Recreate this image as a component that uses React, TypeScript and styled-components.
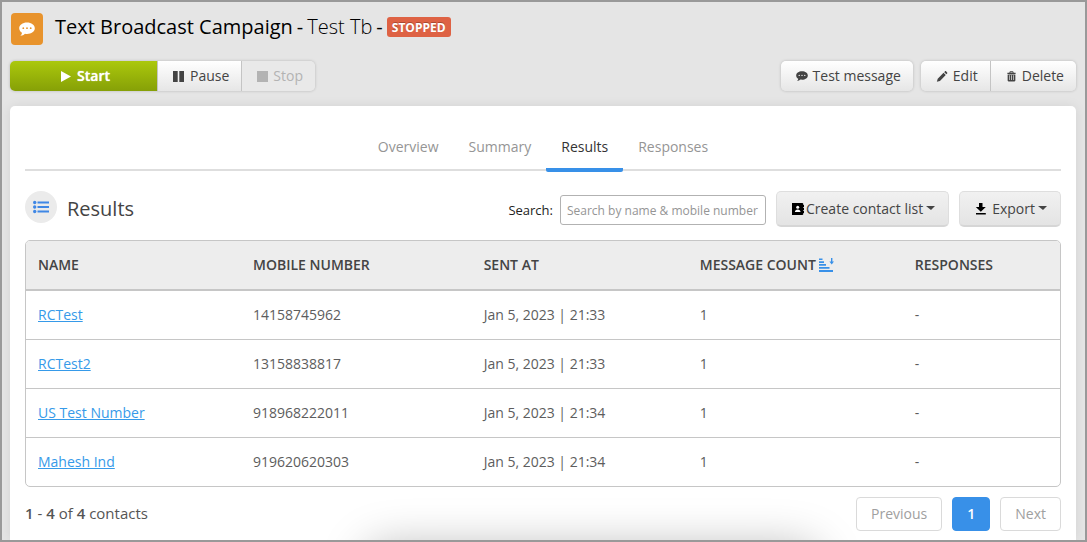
import React from "react";
import styled, { createGlobalStyle, css } from "styled-components";

const GlobalStyle = createGlobalStyle`
  *, *::before, *::after { box-sizing: border-box; }
  body {
    margin: 0;
    background: #e5e5e5;
    color: #444;
    font-family: "Open Sans", "Noto Sans", sans-serif;
    font-size: 14px;
    line-height: 20px;
  }
  button, input { font: inherit; color: inherit; margin: 0; }
`;

const Frame = styled.div`
  position: relative;
  display: flex;
  flex-direction: column;
  min-height: 100vh;
  padding: 11px 9px 0 8px;
  border: 2px solid #999;
  overflow: hidden;
`;

const Header = styled.header`
  display: flex;
  gap: 12px;
  padding-left: 1px;
`;

const CampaignIcon = styled.span`
  display: grid;
  place-items: center;
  width: 32px;
  height: 32px;
  border-radius: 4px;
  background: #e8932c;
  color: #fff;
`;

const Title = styled.h1`
  display: flex;
  align-items: center;
  gap: 4px;
  height: 28px;
  margin: 0;
  font-size: 20px;
  font-weight: 400;
  color: #000;
`;

const CampaignName = styled.span`
  font-weight: 300;
`;

const StatusBadge = styled.span`
  padding: 1px 5px 0;
  border-radius: 3px;
  background: #de6244;
  color: #fff;
  font-size: 12px;
  font-weight: 700;
  line-height: 19px;
  text-shadow: 0 -1px 0 rgba(0, 0, 0, 0.25);
`;

const Toolbar = styled.div`
  display: flex;
  justify-content: space-between;
  margin-top: 16px;
`;

const ToolbarSide = styled.div`
  display: flex;
  gap: 8px;
`;

const ButtonGroup = styled.div`
  display: flex;
  border-radius: 5px;
  box-shadow: 0 0 3px rgba(0, 0, 0, 0.22);
  overflow: hidden;
`;

const ToolButton = styled.button<{ $primary?: boolean }>`
  display: flex;
  align-items: center;
  justify-content: center;
  gap: 5px;
  height: 30px;
  padding: 0 12px 1px 15px;
  border: 0;
  background: linear-gradient(#fff, #e6e6e6);
  white-space: nowrap;

  & + & { border-left: 1px solid #c4c4c4; }

  &:disabled {
    background: #e9e9e9;
    color: #b3b3b3;
  }

  ${(p) =>
    p.$primary &&
    css`
      gap: 6px;
      width: 147px;
      background: linear-gradient(#abc80c, #86a007);
      color: #fff;
      font-weight: 600;
      text-shadow: 0 0 1px #fff;
    `}
`;

const Card = styled.main`
  flex: 1;
  margin-top: 15px;
  padding: 0 15px 9px;
  border-radius: 5px 5px 0 0;
  background: #fff;
  box-shadow: 0 0 12px rgba(0, 0, 0, 0.08);
`;

const Tabs = styled.nav`
  display: flex;
  justify-content: center;
  padding-top: 31px;
  border-bottom: 2px solid #dedede;
`;

const Tab = styled.a<{ $active?: boolean }>`
  height: 35px;
  margin-bottom: -3px;
  padding: 0 15px;
  border-bottom: 4px solid ${(p) => (p.$active ? "#3890e8" : "transparent")};
  border-radius: 2px;
  color: ${(p) => (p.$active ? "#333" : "#959595")};
  text-decoration: none;
`;

const SectionBar = styled.div`
  display: flex;
  align-items: center;
  justify-content: space-between;
  padding: 20px 0 13px;
`;

const SectionTitle = styled.div`
  display: flex;
  gap: 10px;
`;

const RoundIcon = styled.span`
  display: grid;
  place-items: center;
  width: 32px;
  height: 32px;
  border-radius: 50%;
  background: #ebebeb;
  color: #3f87e5;
`;

const SectionHeading = styled.h2`
  margin: 0;
  font-size: 20px;
  font-weight: 400;
  line-height: 36px;
`;

const Actions = styled.div`
  display: flex;
  align-items: center;
  gap: 10px;
`;

const SearchField = styled.div`
  display: flex;
  align-items: center;
  gap: 7px;
  padding-top: 2px;
  color: #222;
  font-size: 13px;
`;

const SearchInput = styled.input`
  width: 206px;
  height: 30px;
  padding: 0 6px;
  border: 1px solid #b2b2b2;
  border-radius: 3px;
  background: #fff;
  font-size: 12px;

  &::placeholder { color: #959595; opacity: 1; }
`;

const MenuButton = styled.button<{ $tight?: boolean }>`
  display: flex;
  align-items: center;
  height: 36px;
  padding: 0 13px 0 15px;
  border: 1px solid #dedede;
  border-bottom: 2px solid #d6d6d6;
  border-radius: 5px;
  background: linear-gradient(#f1f1f1, #e4e4e4);
  white-space: nowrap;

  svg { margin-right: ${(p) => (p.$tight ? "1px" : "5px")}; color: #000; }

  &::after {
    content: "";
    margin: -2px 0 0 3px;
    border: 4px solid transparent;
    border-width: 4px 4px 0 5px;
    border-top-color: #444;
  }
`;

const TableBox = styled.div`
  border: 1px solid #c6c6c6;
  border-radius: 5px;
  overflow: hidden;
`;

const Table = styled.table`
  width: 100%;
  table-layout: fixed;
  border-collapse: separate;
  border-spacing: 0;
`;

const HeadCell = styled.th<{ $width: string }>`
  width: ${(p) => p.$width};
  height: 50px;
  padding: 0 0 0 12px;
  border-bottom: 2px solid #c6c6c6;
  background: #ededed;
  font-weight: 600;
  text-align: left;
  white-space: nowrap;

  svg { margin-left: 3px; color: #3890e8; vertical-align: -2px; }
`;

const Cell = styled.td`
  height: 49px;
  padding: 0 0 0 12px;
  border-bottom: 1px solid #c6c6c6;
  color: #5d5d5d;

  tr:last-child > & { height: 48px; border-bottom: 0; }
`;

const ContactLink = styled.a`
  color: #369ae9;
  text-decoration: underline;
  text-underline-offset: 1px;
`;

const Footer = styled.div`
  display: flex;
  justify-content: space-between;
  padding-top: 10px;
`;

const Count = styled.p`
  margin: 0;
  padding-top: 6px;
  color: #555;
  font-size: 15px;

  b { font-weight: 600; }
`;

const Pager = styled.div`
  position: relative;
  z-index: 1;
  display: flex;
  gap: 10px;
`;

const PageButton = styled.button<{ $current?: boolean }>`
  height: 34px;
  padding: 0 14px;
  border: 1px solid ${(p) => (p.$current ? "#3890e8" : "#dadada")};
  border-radius: 4px;
  background: ${(p) => (p.$current ? "#3890e8" : "#fff")};
  color: ${(p) => (p.$current ? "#fff" : "#a0a0a0")};
  font-weight: ${(p) => (p.$current ? 600 : 400)};
`;

const DockShadow = styled.div`
  position: absolute;
  top: 100%;
  left: 34%;
  right: 25%;
  height: 60px;
  border-radius: 16px;
  box-shadow: 0 10px 46px 4px rgba(0, 0, 0, 0.28);
  pointer-events: none;
`;

const BubbleIcon = ({ size }: { size: number }) => (
  <svg width={size} height={size} viewBox="0 0 16 16" aria-hidden="true">
    <path
      fill="currentColor"
      fillRule="evenodd"
      d="M8 1.500C3.600 1.500.2 4 .2 7.200c0 1.900 1.100 3.500 2.800 4.500-.1 1.200-.7 2.200-1.600 3 1.900-.1 3.500-.8 4.600-2 .6.100 1.300.200 2 .200 4.400 0 7.800-2.500 7.800-5.700S12.400 1.500 8 1.500ZM4.300 6.300a.9.900 0 1 1 0 1.800.9.900 0 0 1 0-1.800Zm3.700 0a.9.900 0 1 1 0 1.800.9.900 0 0 1 0-1.800Zm3.700 0a.9.900 0 1 1 0 1.800.9.900 0 0 1 0-1.800Z"
    />
  </svg>
);

const PlayIcon = () => (
  <svg width="11" height="12" viewBox="0 0 11 12" aria-hidden="true">
    <path fill="currentColor" d="M1 1v11l10-5.500z" />
  </svg>
);

const PauseIcon = () => (
  <svg width="12" height="12" viewBox="0 0 12 12" aria-hidden="true">
    <path fill="currentColor" d="M0 1h4.700v11H0zM6.300 1H11v11H6.300z" />
  </svg>
);

const StopIcon = () => (
  <svg width="11" height="12" viewBox="0 0 11 12" aria-hidden="true">
    <path fill="currentColor" d="M0 1h11v11H0z" />
  </svg>
);

const PencilIcon = () => (
  <svg width="12" height="12" viewBox="0 -1 13 14" aria-hidden="true">
    <path fill="currentColor" d="M.5 12.800l1-3.700L8.300 2.300l2.600 2.600-6.800 6.800zM9.100 1.500l.9-.9c.4-.4.900-.4 1.200 0l1.300 1.300c.4.400.4.900 0 1.200l-.9.900z" />
  </svg>
);

const TrashIcon = () => (
  <svg width="11" height="12" viewBox="0 -1 12 14" aria-hidden="true">
    <path
      fill="currentColor"
      fillRule="evenodd"
      d="M1.200 3.600V2.300h2.400V1.200L4.400.5h3.200l.8.700v1.100h2.400v1.300zM4.700 1.500v.8h2.600v-.8zM1.500 4.200h9V11.500l-1 1h-7l-1-1zM3.400 5.200v5.600h.7V5.200zm2.200 0v5.600h.8V5.200zm2.300 0v5.600h.7V5.200z"
    />
  </svg>
);

const ListIcon = () => (
  <svg width="16" height="14" viewBox="0 0 16 14" aria-hidden="true">
    <g fill="currentColor">
      <circle cx="1.700" cy="2.500" r="1.700" />
      <circle cx="1.700" cy="7" r="1.700" />
      <circle cx="1.700" cy="11.500" r="1.700" />
      <path d="M4.500 1.500H16v2H4.500zM4.500 6H16v2H4.500zM4.500 10.500H16v2H4.500z" />
    </g>
  </svg>
);

const ContactsIcon = () => (
  <svg width="13" height="13" viewBox="0 0 13 13" aria-hidden="true">
    <path fill="#000" d="M0 1h10.500l.8.800v1.200h.7v2h-.7v1h.7v2h-.7v1h.7v2h-.7v1.300l-.8.700H0z" />
    <circle cx="5.700" cy="5.300" r="1.500" fill="#fff" />
    <path fill="#fff" d="M2.900 9.900c0-1.600 1.200-2.500 2.800-2.500s2.800.9 2.800 2.500z" />
  </svg>
);

const DownloadIcon = () => (
  <svg width="12" height="13" viewBox="0 0 12 13" aria-hidden="true">
    <path fill="currentColor" d="M4 1h3.500v4h3.300L5.800 9.800.8 5H4zM1 11h9.800v1.500H1z" />
  </svg>
);

const SortIcon = () => (
  <svg width="15" height="14" viewBox="0 0 15 14" aria-hidden="true">
    <path
      fill="currentColor"
      d="M0 .5h3.500V2H0zM0 3.300h5V5H0zM0 6h7v1.800H0zM0 8.900h10.500v1.800H0zM0 12h14v2H0zM12 0h1.400V3.500H15L12.700 6.400 10.400 3.500H12z"
    />
  </svg>
);

const columns = [
  { label: "NAME", width: "20.8%" },
  { label: "MOBILE NUMBER", width: "22.3%" },
  { label: "SENT AT", width: "20.9%" },
  { label: "MESSAGE COUNT", width: "20.8%", sorted: true },
  { label: "RESPONSES", width: "15.2%" },
];

const contacts = [
  { name: "RCTest", mobile: "14158745962", sentAt: "Jan 5, 2023 | 21:33" },
  { name: "RCTest2", mobile: "13158838817", sentAt: "Jan 5, 2023 | 21:33" },
  { name: "US Test Number", mobile: "918968222011", sentAt: "Jan 5, 2023 | 21:34" },
  { name: "Mahesh Ind", mobile: "919620620303", sentAt: "Jan 5, 2023 | 21:34" },
];

const tabs = ["Overview", "Summary", "Results", "Responses"];

export default function App() {
  return (
    <>
      <GlobalStyle />
      <Frame>
        <Header>
          <CampaignIcon>
            <BubbleIcon size={16} />
          </CampaignIcon>
          <Title>
            <span>Text Broadcast Campaign</span>
            <span>-</span>
            <CampaignName>Test Tb</CampaignName>
            <span>-</span>
            <StatusBadge>STOPPED</StatusBadge>
          </Title>
        </Header>

        <Toolbar>
          <ButtonGroup>
            <ToolButton type="button" $primary>
              <PlayIcon />
              Start
            </ToolButton>
            <ToolButton type="button">
              <PauseIcon />
              Pause
            </ToolButton>
            <ToolButton type="button" disabled>
              <StopIcon />
              Stop
            </ToolButton>
          </ButtonGroup>
          <ToolbarSide>
            <ButtonGroup>
              <ToolButton type="button">
                <BubbleIcon size={12} />
                Test message
              </ToolButton>
            </ButtonGroup>
            <ButtonGroup>
              <ToolButton type="button">
                <PencilIcon />
                Edit
              </ToolButton>
              <ToolButton type="button">
                <TrashIcon />
                Delete
              </ToolButton>
            </ButtonGroup>
          </ToolbarSide>
        </Toolbar>

        <Card>
          <Tabs>
            {tabs.map((tab) => (
              <Tab key={tab} href={`#${tab.toLowerCase()}`} $active={tab === "Results"}>
                {tab}
              </Tab>
            ))}
          </Tabs>

          <SectionBar>
            <SectionTitle>
              <RoundIcon>
                <ListIcon />
              </RoundIcon>
              <SectionHeading>Results</SectionHeading>
            </SectionTitle>
            <Actions>
              <SearchField>
                <label htmlFor="contact-search">Search:</label>
                <SearchInput
                  id="contact-search"
                  type="text"
                  placeholder="Search by name &amp; mobile number"
                />
              </SearchField>
              <MenuButton type="button" $tight>
                <ContactsIcon />
                Create contact list
              </MenuButton>
              <MenuButton type="button">
                <DownloadIcon />
                Export
              </MenuButton>
            </Actions>
          </SectionBar>

          <TableBox>
            <Table>
              <thead>
                <tr>
                  {columns.map((column) => (
                    <HeadCell key={column.label} scope="col" $width={column.width}>
                      {column.label}
                      {column.sorted && <SortIcon />}
                    </HeadCell>
                  ))}
                </tr>
              </thead>
              <tbody>
                {contacts.map((contact) => (
                  <tr key={contact.name}>
                    <Cell>
                      <ContactLink href="#contact">{contact.name}</ContactLink>
                    </Cell>
                    <Cell>{contact.mobile}</Cell>
                    <Cell>{contact.sentAt}</Cell>
                    <Cell>1</Cell>
                    <Cell>-</Cell>
                  </tr>
                ))}
              </tbody>
            </Table>
          </TableBox>

          <Footer>
            <Count>
              <b>1</b> - <b>4</b> of <b>4</b> contacts
            </Count>
            <Pager>
              <PageButton type="button">Previous</PageButton>
              <PageButton type="button" $current>
                1
              </PageButton>
              <PageButton type="button">Next</PageButton>
            </Pager>
          </Footer>
        </Card>
        <DockShadow />
      </Frame>
    </>
  );
}
